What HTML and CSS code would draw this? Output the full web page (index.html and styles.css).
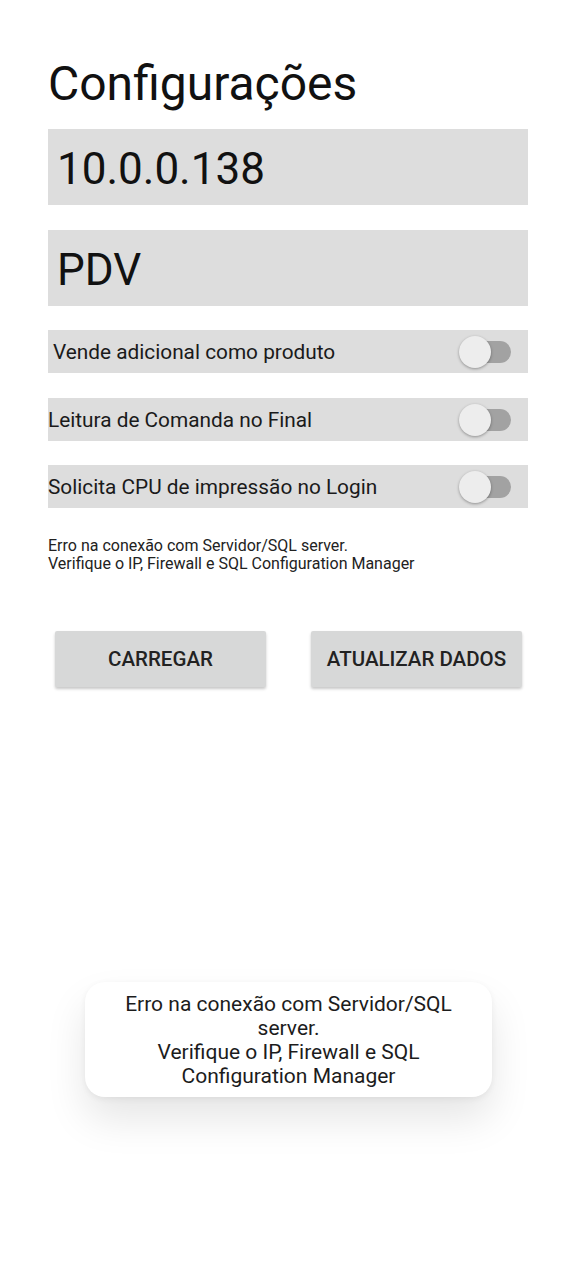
FILE: index.html
```html
<!DOCTYPE html>
<html lang="pt">
<head>
<meta charset="utf-8">
<title>Configurações</title>
<link rel="stylesheet" href="styles.css">
</head>
<body>
<main class="page">
  <h1 class="title">Configurações</h1>
  <div class="field field-ip">10.0.0.138</div>
  <div class="field field-pdv">PDV</div>

  <div class="switch-row row-1">
    <span class="switch-label indent">Vende adicional como produto</span>
    <span class="switch"><span class="track"></span><span class="thumb"></span></span>
  </div>
  <div class="switch-row row-2">
    <span class="switch-label">Leitura de Comanda no Final</span>
    <span class="switch"><span class="track"></span><span class="thumb"></span></span>
  </div>
  <div class="switch-row row-3">
    <span class="switch-label">Solicita CPU de impressão no Login</span>
    <span class="switch"><span class="track"></span><span class="thumb"></span></span>
  </div>

  <p class="status">Erro na conexão com Servidor/SQL server.<br>Verifique o IP, Firewall e SQL Configuration Manager</p>

  <div class="buttons">
    <button class="btn">CARREGAR</button>
    <button class="btn">ATUALIZAR DADOS</button>
  </div>
</main>

<div class="toast">Erro na conexão com Servidor/SQL server.<br>Verifique o IP, Firewall e SQL Configuration Manager</div>
</body>
</html>
```

FILE: styles.css
```css
* { box-sizing: border-box; }

html, body {
  margin: 0;
  padding: 0;
  background: #ffffff;
}

body {
  width: 576px;
  height: 1280px;
  position: relative;
  font-family: Roboto, "Noto Sans", "Liberation Sans", sans-serif;
  color: #141414;
}

.page {
  padding: 56px 48px 0 48px;
}

.title {
  margin: 0;
  font-size: 48px;
  font-weight: 400;
  line-height: 56px;
  height: 73px;
  color: #111111;
}

.field {
  height: 76px;
  background: #dddddd;
  font-size: 44px;
  line-height: 72px;
  padding: 4px 0 0 9px;
  color: #111111;
}

.field-pdv { margin-top: 25px; }

.switch-row {
  height: 43px;
  background: #dddddd;
  display: flex;
  align-items: center;
  justify-content: space-between;
  padding-right: 17px;
}

.row-1 { margin-top: 24px; }
.row-2 { margin-top: 25px; }
.row-3 { margin-top: 24px; }

.switch-label {
  font-size: 20.8px;
  color: #1a1a1a;
}

.switch-label.indent { padding-left: 5px; }

.switch {
  position: relative;
  width: 52px;
  height: 32px;
}

.track {
  position: absolute;
  left: 6px;
  right: 0;
  top: 5px;
  height: 22px;
  border-radius: 11px;
  background: #a2a2a2;
}

.thumb {
  position: absolute;
  left: 0;
  top: 0;
  width: 32px;
  height: 32px;
  border-radius: 50%;
  background: #ededed;
  box-shadow: 0 1px 3px rgba(0, 0, 0, 0.35);
}

.status {
  margin: 29px 0 0 0;
  font-size: 16px;
  line-height: 18px;
  color: #222222;
}

.buttons {
  margin-top: 58px;
  display: flex;
  justify-content: space-between;
  padding: 0 6px 0 7px;
}

.btn {
  width: 211px;
  height: 56px;
  border: none;
  border-radius: 2px;
  background: #d7d8d8;
  box-shadow: 0 2px 3px rgba(0, 0, 0, 0.22);
  font-family: Roboto, "Noto Sans", "Liberation Sans", sans-serif;
  font-size: 20.5px;
  font-weight: 500;
  color: #222222;
  padding: 0;
}

.toast {
  position: absolute;
  left: 85px;
  top: 982px;
  width: 407px;
  height: 115px;
  padding: 10px 20px 0 20px;
  background: #ffffff;
  border-radius: 20px;
  box-shadow: 0 22px 40px rgba(0, 0, 0, 0.10), 0 2px 6px rgba(0, 0, 0, 0.06);
  text-align: center;
  font-size: 21px;
  line-height: 24px;
  color: #1c1c1c;
}
```
